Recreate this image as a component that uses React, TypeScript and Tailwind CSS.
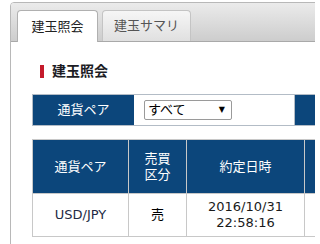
const font = { fontFamily: '"DejaVu Sans", "Noto Sans CJK JP", sans-serif' };

export default function App() {
  return (
    <div className="w-[315px] h-[244px] overflow-hidden bg-white text-[13px] leading-[16px] text-[#222]" style={font}>
      <div className="ml-[10px] mt-[2px] w-[700px] h-[400px] border border-[#b8b8b8] rounded-t-[4px]">
        <div className="h-[39px] flex items-end gap-[4px] pl-[6px] border-b border-[#a9a9a9] rounded-t-[3px] bg-gradient-to-b from-[#ebebeb] to-[#cdcdcd]">
          <div className="-mb-px h-[32px] w-[81px] flex items-center justify-center bg-white border border-b-0 border-[#b0b0b0] rounded-t-[4px] text-[#222]">
            建玉照会
          </div>
          <div className="h-[31px] w-[89px] flex items-center justify-center border border-b-0 border-[#c4c4c4] rounded-t-[4px] bg-gradient-to-b from-[#f6f6f6] to-[#e0e0e0] text-[#555]">
            建玉サマリ
          </div>
        </div>

        <div className="pl-[21px] pt-[19px]">
          <div className="ml-[8px] h-[20px] flex items-center gap-[8px]">
            <div className="w-[4px] h-[13px] bg-[#c41a2b]" />
            <h2 className="text-[14px] font-bold text-[#1c1c24]">建玉照会</h2>
          </div>

          <div className="mt-[13px] flex h-[32px] border border-[#b3bcc6]">
            <div className="w-[101px] bg-[#0c467b] text-white flex items-center justify-center">通貨ペア</div>
            <div className="w-[161px] bg-white border-r border-[#b3bcc6] flex items-center pl-[10px]">
              <div className="w-[88px] h-[20px] border border-[#9a9a9a] rounded-[2px] flex items-center justify-between pl-[3px] pr-[6px] text-black">
                <span>すべて</span>
                <span className="text-[8px] leading-none">▼</span>
              </div>
            </div>
            <div className="w-[120px] bg-[#0c467b]" />
          </div>

          <table className="mt-[13px] border-collapse table-fixed w-[400px]">
            <colgroup>
              <col className="w-[96px]" />
              <col className="w-[58px]" />
              <col className="w-[118px]" />
              <col />
            </colgroup>
            <thead>
              <tr className="h-[54px] bg-[#0c467b] text-white">
                <th className="font-normal border border-[#c8c8c8]">通貨ペア</th>
                <th className="font-normal border border-[#c8c8c8]">売買<br />区分</th>
                <th className="font-normal border border-[#c8c8c8]">約定日時</th>
                <th className="font-normal border border-[#c8c8c8]"></th>
              </tr>
            </thead>
            <tbody>
              <tr className="h-[43px]">
                <td className="text-center border border-[#c8c8c8] text-[#1e2a44]">USD/JPY</td>
                <td className="text-center border border-[#c8c8c8] text-black">売</td>
                <td className="text-center border border-[#c8c8c8] text-[#1a1a1a]">2016/10/31<br />22:58:16</td>
                <td className="border border-[#c8c8c8]"></td>
              </tr>
            </tbody>
          </table>
        </div>
      </div>
    </div>
  );
}
